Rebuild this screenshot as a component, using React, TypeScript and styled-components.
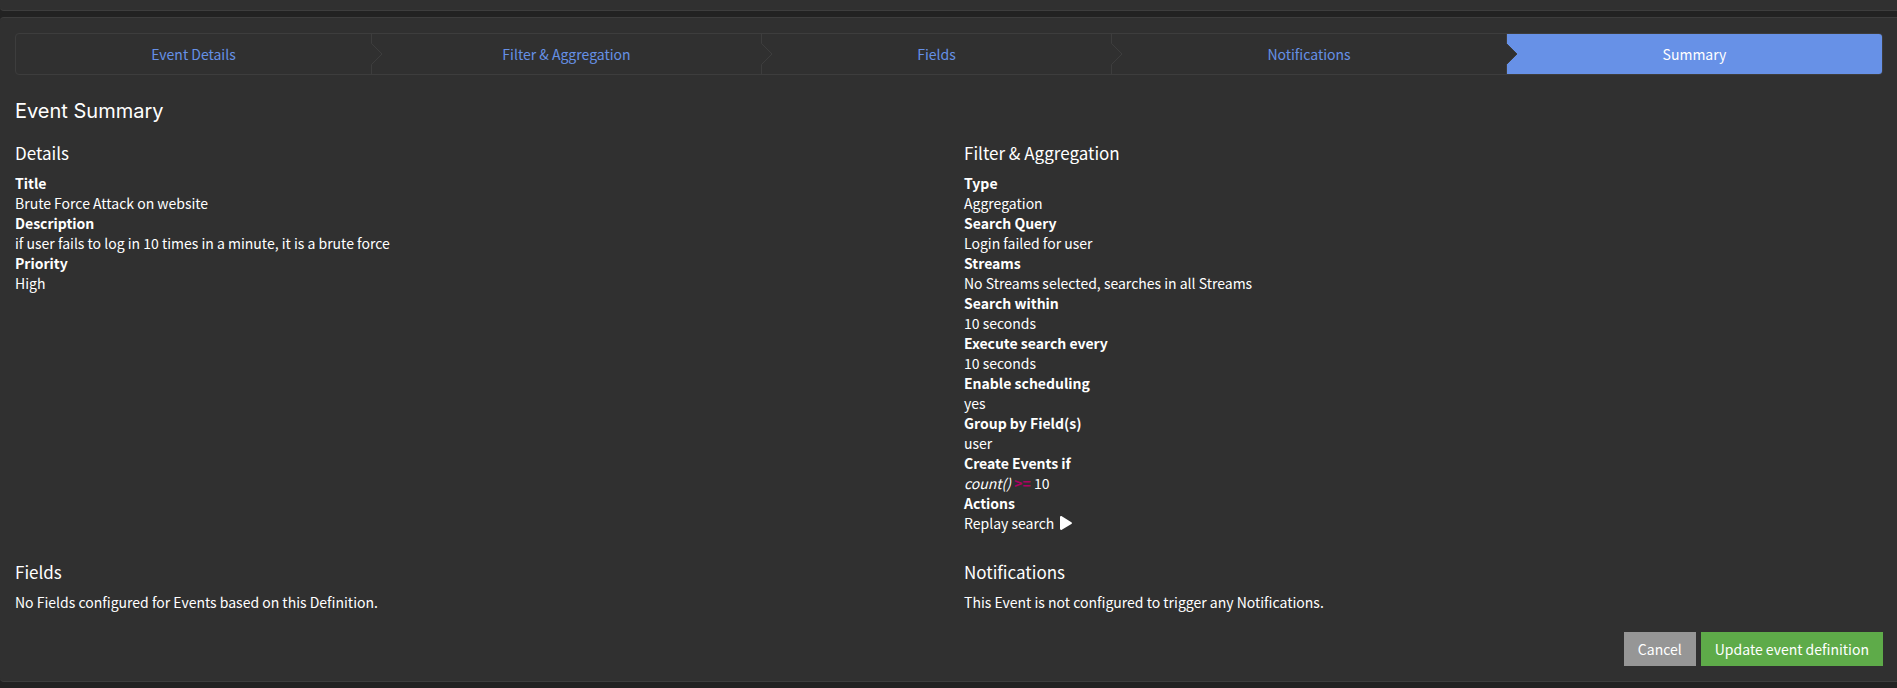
import React from "react";
import styled, { createGlobalStyle } from "styled-components";

const colors = {
  page: "#222222",
  panel: "#303030",
  line: "#3d3d3d",
  link: "#6690e6",
  active: "#6791e7",
  text: "#ffffff",
  operator: "#ad0062",
  cancel: "#969696",
  submit: "#5eab49",
};

const GlobalStyle = createGlobalStyle`
  * {
    box-sizing: border-box;
  }
  body {
    margin: 0;
    background: ${colors.page};
    color: ${colors.text};
    font-family: "Noto Sans CJK SC", "Noto Sans", sans-serif;
    font-size: 14px;
    line-height: 20px;
  }
`;

const Page = styled.div`
  display: flex;
  flex-direction: column;
  gap: 6px;
`;

const PanelEnd = styled.div`
  height: 11px;
  background: ${colors.panel};
  border-bottom: 1px solid ${colors.line};
  border-radius: 0 0 0 4px;
`;

const Panel = styled.main`
  padding: 15px 14px 15px 15px;
  background: ${colors.panel};
  border: 1px solid ${colors.line};
  border-left: 0;
  border-right: 0;
  border-radius: 4px 0 0 4px;
`;

const Steps = styled.nav`
  display: flex;
  border: 1px solid ${colors.line};
  border-radius: 4px;
`;

const Step = styled.a<{ $share: number; $active?: boolean }>`
  position: relative;
  flex: ${(p) => p.$share} 1 0;
  padding: 10px 0;
  text-align: center;
  text-decoration: none;
  color: ${(p) => (p.$active ? colors.text : colors.link)};
  background: ${(p) => (p.$active ? colors.active : "transparent")};
  border-left: 1px solid ${colors.line};

  &:first-child {
    border-left: 0;
  }
  &:last-child {
    border-radius: 0 3px 3px 0;
  }
`;

const Arrow = styled.svg`
  position: absolute;
  top: 9px;
  left: -1px;
  width: 12px;
  height: 22px;
`;

const Title = styled.h2`
  margin: 22px 0 0;
  font-family: Inter, "Open Sans", sans-serif;
  font-size: 20px;
  font-weight: 400;
  line-height: 28px;
`;

const Grid = styled.div`
  display: grid;
  grid-template-columns: 1fr 1fr;
  column-gap: 30px;
`;

const SectionTitle = styled.h3`
  margin: 16px 0 8px;
  font-size: 17px;
  font-weight: 400;
  line-height: 24px;
`;

const Definitions = styled.dl`
  margin: 0 0 11px;
`;

const Term = styled.dt`
  font-weight: 700;
`;

const Value = styled.dd`
  margin: 0;
`;

const Note = styled.p`
  margin: 0;
`;

const Operator = styled.strong`
  color: ${colors.operator};
`;

const ReplayLink = styled.a`
  display: inline-flex;
  align-items: center;
  gap: 6px;
  color: inherit;
  text-decoration: none;
`;

const Actions = styled.div`
  display: flex;
  justify-content: flex-end;
  gap: 5px;
  margin-top: 20px;
`;

const Button = styled.button<{ $color: string }>`
  padding: 6px 14px;
  border: 0;
  background: ${(p) => p.$color};
  color: ${colors.text};
  font: inherit;
  line-height: 22px;
`;

const steps = [
  { label: "Event Details", share: 355 },
  { label: "Filter & Aggregation", share: 389 },
  { label: "Fields", share: 349 },
  { label: "Notifications", share: 394 },
  { label: "Summary", share: 375, active: true },
];

const details: [string, React.ReactNode][] = [
  ["Title", "Brute Force Attack on website"],
  ["Description", "if user fails to log in 10 times in a minute, it is a brute force"],
  ["Priority", "High"],
];

const aggregation: [string, React.ReactNode][] = [
  ["Type", "Aggregation"],
  ["Search Query", "Login failed for user"],
  ["Streams", "No Streams selected, searches in all Streams"],
  ["Search within", "10 seconds"],
  ["Execute search every", "10 seconds"],
  ["Enable scheduling", "yes"],
  ["Group by Field(s)", "user"],
  [
    "Create Events if",
    <>
      <em>count()</em> <Operator>&gt;=</Operator> 10
    </>,
  ],
  [
    "Actions",
    <ReplayLink href="#replay">
      Replay search
      <svg width="12" height="14" viewBox="0 0 12 14" aria-hidden="true">
        <path
          d="M0 1.2C0 .3 1 -.2 1.8 .3L11.4 6.2C12.2 6.7 12.2 7.5 11.4 8L1.8 13.7C1 14.2 0 13.7 0 12.8Z"
          fill="currentColor"
        />
      </svg>
    </ReplayLink>,
  ],
];

function DefinitionList({ items }: { items: [string, React.ReactNode][] }) {
  return (
    <Definitions>
      {items.map(([term, value]) => (
        <React.Fragment key={term}>
          <Term>{term}</Term>
          <Value>{value}</Value>
        </React.Fragment>
      ))}
    </Definitions>
  );
}

export default function App() {
  return (
    <Page>
      <GlobalStyle />
      <PanelEnd />
      <Panel>
        <Steps aria-label="Event definition steps">
          {steps.map((step, index) => (
            <Step
              key={step.label}
              href="#step"
              $share={step.share}
              $active={step.active}
              aria-current={step.active ? "step" : undefined}
            >
              {index > 0 && (
                <Arrow viewBox="0 0 12 22" aria-hidden="true">
                  <path d="M0 .5H.5L11 11L.5 21.5H0Z" fill={colors.panel} />
                  <path d="M.5 .5L11 11L.5 21.5" fill="none" stroke={colors.line} />
                </Arrow>
              )}
              {step.label}
            </Step>
          ))}
        </Steps>
        <Title>Event Summary</Title>
        <Grid>
          <section>
            <SectionTitle>Details</SectionTitle>
            <DefinitionList items={details} />
          </section>
          <section>
            <SectionTitle>Filter &amp; Aggregation</SectionTitle>
            <DefinitionList items={aggregation} />
          </section>
          <section>
            <SectionTitle>Fields</SectionTitle>
            <Note>No Fields configured for Events based on this Definition.</Note>
          </section>
          <section>
            <SectionTitle>Notifications</SectionTitle>
            <Note>This Event is not configured to trigger any Notifications.</Note>
          </section>
        </Grid>
        <Actions>
          <Button type="button" $color={colors.cancel}>
            Cancel
          </Button>
          <Button type="submit" $color={colors.submit}>
            Update event definition
          </Button>
        </Actions>
      </Panel>
    </Page>
  );
}
